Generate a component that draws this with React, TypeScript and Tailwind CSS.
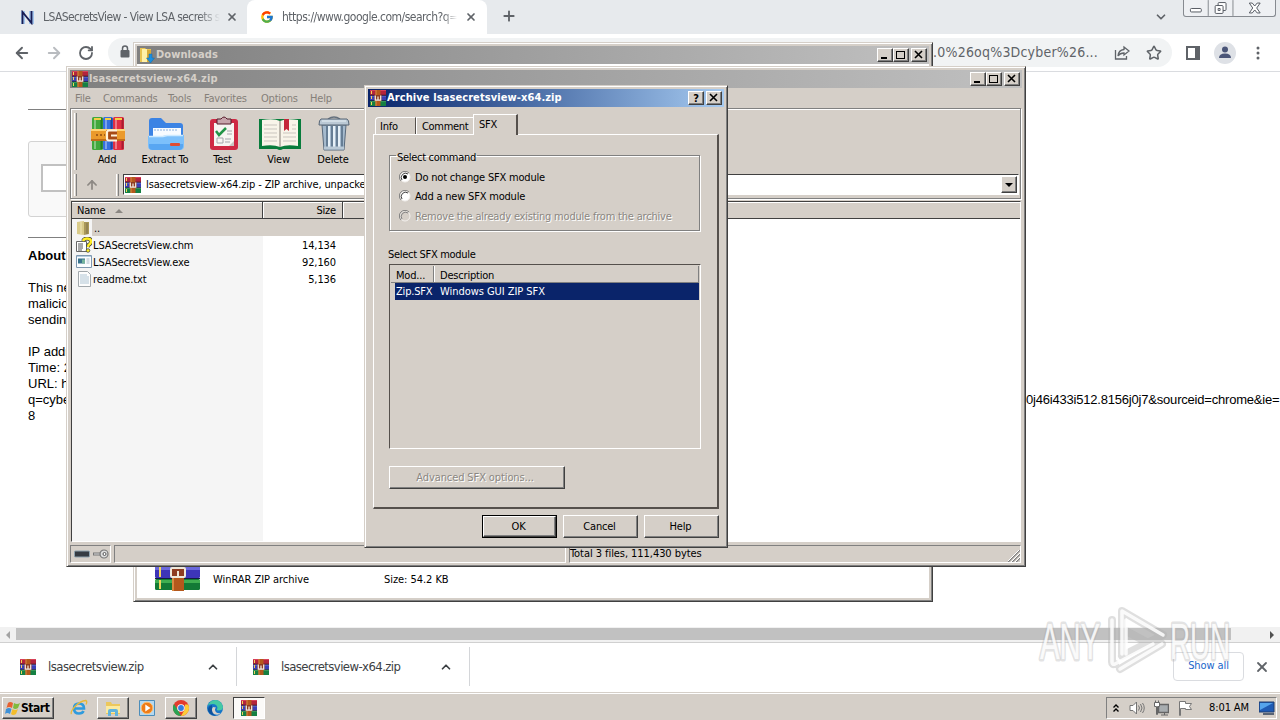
import type { ReactNode } from 'react';
import { ArrowLeft, ArrowRight, ArrowUp, ChevronDown, ChevronUp, Plus, RotateCw, Star, X } from 'lucide-react';
import { FcGoogle } from 'react-icons/fc';

const raised =
  'border border-t-white border-l-white border-r-[#404040] border-b-[#404040] shadow-[inset_-1px_-1px_0_#808080] bg-[#d5cfc8]';
const frame =
  'border border-t-[#d5cfc8] border-l-[#d5cfc8] border-r-[#404040] border-b-[#404040] shadow-[inset_1px_1px_0_#fff,inset_-1px_-1px_0_#808080] bg-[#d5cfc8]';
const etched = 'border border-t-[#808080] border-l-[#808080] border-r-white border-b-white';

function Books({ className }: { className: string }) {
  return (
    <svg viewBox="0 0 16 16" preserveAspectRatio="none" className={className}>
      <rect width="16" height="5" y="0" fill="#b3243c" />
      <rect width="16" height="1" y="0" fill="#d8405a" />
      <rect width="16" height="5" y="5.5" fill="#3b3fb4" />
      <rect width="16" height="1" y="5.5" fill="#6a78dc" />
      <rect width="16" height="5" y="11" fill="#158043" />
      <rect width="16" height="1" y="11" fill="#42b45c" />
      <rect width="16" height="1" y="4.7" fill="#381830" />
      <rect width="16" height="1" y="10.2" fill="#182848" />
      <path d="M1 1h1v3H1zM1 6h1v3H1zM1 12h1v3H1z" fill="#f2d45c" />
      <rect x="5.5" width="5" height="16" fill="#b4581c" />
      <rect x="5.5" width="1" height="16" fill="#d98840" />
      <path d="M4.500 5h7v6h-7z" fill="#8e3b20" />
      <path d="M5.300 5.500v4.700h5.400V5.500M8 6.500v3" fill="none" stroke="#f6f1e6" strokeWidth="1.200" />
    </svg>
  );
}

// Large archive icon, with the buckle drawn as a closed ring
function BooksLarge({ className }: { className: string }) {
  return (
    <svg viewBox="0 0 45 38" className={className}>
      <rect width="45" height="12" rx="1.5" fill="#b3243c" />
      <rect y="13" width="45" height="12" rx="1.5" fill="#3d35b8" />
      <rect y="14" width="45" height="3" fill="#6a68dc" />
      <rect y="26" width="45" height="11" rx="1.5" fill="#137a36" />
      <rect y="27" width="45" height="3" fill="#3fae50" />
      <path d="M0 25.500h45" stroke="#141c40" />
      <path d="M5 14v10M5 27v9" stroke="#f2d45c" strokeWidth="2" />
      <rect x="17" width="12" height="38" fill="#b4581c" />
      <path d="M18 0v38" stroke="#d98840" strokeWidth="2" />
      <rect x="16" y="15" width="14" height="9" rx="1" fill="#8e3b20" stroke="#efe8da" strokeWidth="2" />
      <path d="M23 18v5" stroke="#efe8da" strokeWidth="2" />
    </svg>
  );
}

function AddIcon() {
  return (
    <svg viewBox="0 0 36 36" className="h-9 w-9">
      <rect x="2" y="1" width="11" height="33" rx="1.5" fill="#41a83c" />
      <rect x="13" y="1" width="10" height="33" rx="1.5" fill="#3670df" />
      <rect x="23" y="1" width="11" height="33" rx="1.5" fill="#e02e42" />
      <path d="M11.500 2v31" stroke="#257a2a" strokeWidth="2" />
      <path d="M21.500 2v31" stroke="#1f479f" strokeWidth="2" />
      <path d="M32.500 2v31" stroke="#a81c30" strokeWidth="2" />
      <path d="M5 2v31M16 2v31M26 2v31" stroke="#fff" strokeOpacity=".35" strokeWidth="2" />
      <path d="M4 3h7M15 3h6M25 3h7" stroke="#f6cf45" strokeWidth="2" />
      <rect x="1" y="13" width="34" height="12" fill="#eb9a2c" />
      <path d="M1 14h34" stroke="#ffd477" strokeWidth="2" />
      <path d="M1 24h34" stroke="#b45f14" strokeWidth="1.500" />
      <path d="M6 19h9" stroke="#8f4b12" strokeWidth="1.500" strokeDasharray="2 2" />
      <path d="M16 14h11v11H16z" fill="#a84b16" />
      <path d="M27 14.500h-8q-2 0-2 2v6q0 2 2 2h8M21 19.500h6" fill="none" stroke="#fff3dd" strokeWidth="2.200" />
    </svg>
  );
}

function ExtractIcon() {
  return (
    <svg viewBox="0 0 38 36" className="h-9 w-[38px]">
      <path d="M2 5q0-3 3-3h9l5 5h14q3 0 3 3v18H2z" fill="#3b83e4" />
      <path d="M6 12h28v9H6z" fill="#f7fbff" />
      <path d="M8 13v2M11 13v2M14 13v2M17 13v2M20 13v2M23 13v2M26 13v2M29 13v2" stroke="#8ab0df" />
      <path d="M1 20h15l4-1h17v11q0 4-4 4H5q-4 0-4-4z" fill="#7cc0fb" />
      <path d="M2 20.500h14l4-1h16" stroke="#cdeaff" fill="none" strokeWidth="1.500" />
      <path d="M2 28h34v3q-1 3-4 3H6q-4 0-4-3z" fill="#58a6f2" />
      <rect x="23" y="27" width="10" height="3" rx="1" fill="#e04c34" />
    </svg>
  );
}

function TestIcon() {
  return (
    <svg viewBox="0 0 30 36" className="h-9 w-[30px]">
      <rect x="1" y="3" width="28" height="31" rx="3" fill="#cf2944" />
      <path d="M5 7h20v23H5z" fill="#f7f5f2" />
      <path d="M20 30l5-5v5z" fill="#c9c5c2" />
      <path d="M8 3h4q3-4 6 0h4v5H8z" fill="#c7a5ac" stroke="#551a2a" />
      <path d="M7 15l3 4 7-7" stroke="#239447" strokeWidth="2.500" fill="none" />
      <path d="M18 15h5M18 18h5M8 22h6v5H8zM16 23h6M16 26h5" stroke="#a5a5ab" fill="none" />
    </svg>
  );
}

function ViewIcon() {
  return (
    <svg viewBox="0 0 42 36" className="h-9 w-[42px]">
      <path d="M0 3h42v30H24q-3 2-6 0H0z" fill="#087c3c" />
      <path d="M3 4q12-2 18 1v26q-7-3-18-1zM39 4q-12-2-18 1v26q7-3 18-1z" fill="#f8f4e9" />
      <path d="M21 5v26" stroke="#a9a398" strokeWidth="1.500" />
      <path d="M5 9h13M5 13h13M5 17h13M5 21h13M5 25h13M24 17h13M24 21h13M24 25h13M33 9h4M33 13h4" stroke="#c9c5be" />
      <path d="M25 3h5v12l-2.500-2-2.500 2z" fill="#c5263a" />
    </svg>
  );
}

function TrashIcon() {
  return (
    <svg viewBox="0 0 32 36" className="h-9 w-8">
      <path d="M4 9h24l-2 25H6z" fill="#a5bacd" stroke="#596a7c" />
      <path d="M9 10v21M14 10v21M19 10v21M24 10v21" stroke="#60788f" strokeWidth="1.800" />
      <path d="M11 10v21M16 10v21M21 10v21" stroke="#e7f1f8" strokeWidth="2" />
      <path d="M10 3q6-4 12 0" fill="none" stroke="#66717e" strokeWidth="1.500" />
      <path d="M3 3h26q2 1 2 6H1q0-5 2-6z" fill="#bac8d4" stroke="#566575" />
      <path d="M4 5h24" stroke="#e9f1f6" />
      <path d="M6 32h20" stroke="#b9c9d6" strokeWidth="3" />
    </svg>
  );
}

type Glyph = 'min' | 'max' | 'close' | 'help';

function CaptionButton({ glyph }: { glyph: Glyph }) {
  return (
    <div className={`flex h-[14px] w-4 items-center justify-center ${raised}`}>
      {glyph === 'help' ? (
        <span className="text-[11px] font-bold leading-none">?</span>
      ) : (
        <svg viewBox="0 0 10 10" className="h-[10px] w-[10px]" shapeRendering="crispEdges" fill="none" stroke="#000">
          {glyph === 'min' && <path d="M1 8h6" strokeWidth="2" />}
          {glyph === 'max' && <path d="M.5 1.500h8v7h-8zM0 1h9" />}
          {glyph === 'close' && <path d="M1 1l7 7M8 1l-7 7" strokeWidth="1.600" shapeRendering="auto" />}
        </svg>
      )}
    </div>
  );
}

function Caption({ icon, title, active, buttons }: { icon: ReactNode; title: string; active?: boolean; buttons: Glyph[] }) {
  return (
    <div
      className={`flex h-[18px] shrink-0 items-center pl-0.5 pr-0.5 ${
        active ? 'bg-linear-to-r from-[#0a246a] to-[#a6caf0] text-white' : 'bg-linear-to-r from-[#808080] to-[#c0c0c0] text-[#d5cfc8]'
      }`}
    >
      {icon}
      <span className="ml-px grow pt-px text-[11px] font-bold tracking-[0.09px]">{title}</span>
      <div className="flex text-black">
        {buttons.map((b) => (
          <div key={b} className={b === 'close' ? 'ml-0.5' : ''}>
            <CaptionButton glyph={b} />
          </div>
        ))}
      </div>
    </div>
  );
}

function Radio({ label, checked, disabled }: { label: string; checked?: boolean; disabled?: boolean }) {
  return (
    <div className={`flex h-[19.500px] items-center ${disabled ? 'text-[#8b8782] [text-shadow:1px_1px_0_#fff]' : ''}`}>
      <svg viewBox="0 0 12 12" className="mr-1 h-3 w-3 -translate-y-px">
        <circle cx="6" cy="6" r="5" fill={disabled ? '#d5cfc8' : '#fff'} stroke="#f4f1ee" />
        <path d="M2 10A5.500 5.500 0 0 1 10 2" fill="none" stroke="#808080" />
        <path d="M3 9A4.300 4.300 0 0 1 9 3" fill="none" stroke={disabled ? '#808080' : '#404040'} />
        {checked && <circle cx="6" cy="6" r="2" fill="#000" />}
      </svg>
      <span>{label}</span>
    </div>
  );
}

function DownloadsWindow() {
  return (
    <div className={`absolute left-[133px] top-[42px] flex h-[560px] w-[800px] flex-col p-[3px] ${frame}`}>
      <Caption
        title="Downloads"
        buttons={['min', 'max', 'close']}
        icon={
          <svg viewBox="0 0 16 16" className="h-4 w-4">
            <path d="M1 1h5l1 1h5v13H1z" fill="#e9c452" />
            <path d="M3 2h5v13H3z" fill="#fff0a8" />
            <path d="M8 3h4v12H8z" fill="#d9ab37" />
            <path d="M10 7h3v4h2.500L11.500 16 7.500 11H10z" fill="#1b8fdf" stroke="#1768a8" strokeWidth=".5" />
          </svg>
        }
      />
      <div className="flex grow flex-col justify-end bg-white">
        <div className="flex h-[36px] items-center">
          <BooksLarge className="-mt-[17px] ml-[18px] h-[38px] w-[45px]" />
          <span className="ml-[13px] w-[171px] pt-px tracking-[-0.05px]">WinRAR ZIP archive</span>
          <span className="pt-px tracking-[-0.05px]">Size: 54.2 KB</span>
        </div>
      </div>
    </div>
  );
}

const menu = [
  { label: 'File', w: 'w-7' },
  { label: 'Commands', w: 'w-[65px]' },
  { label: 'Tools', w: 'w-9' },
  { label: 'Favorites', w: 'w-[57px]' },
  { label: 'Options', w: 'w-[49px]' },
  { label: 'Help', w: 'w-8' },
];

const tools = [
  { label: 'Add', icon: <AddIcon />, w: 'w-[58px]' },
  { label: 'Extract To', icon: <ExtractIcon />, w: 'w-[58px]' },
  { label: 'Test', icon: <TestIcon />, w: 'w-[57px]' },
  { label: 'View', icon: <ViewIcon />, w: 'w-[55px]' },
  { label: 'Delete', icon: <TrashIcon />, w: 'w-[54px]' },
];

const files = [
  {
    name: 'LSASecretsView.chm',
    size: '14,134',
    icon: (
      <svg viewBox="0 0 16 16" className="h-4 w-4">
        <path d="M.5 4.500h10v10h-10z" fill="#fff" stroke="#666" />
        <path d="M2 7h5M2 9h5M2 11h5M2 13h4" stroke="#555" />
        <path d="M7 4q1-2.500 4-2.500 4 0 4 3 0 2-2.500 3.500L12 10" fill="none" stroke="#333" strokeWidth="3.800" />
        <path d="M7 4q1-2.500 4-2.500 4 0 4 3 0 2-2.500 3.500L12 10" fill="none" stroke="#ffee25" strokeWidth="2.500" />
        <circle cx="12" cy="13.500" r="1.800" fill="#ffee25" stroke="#333" strokeWidth=".7" />
      </svg>
    ),
  },
  {
    name: 'LSASecretsView.exe',
    size: '92,160',
    icon: (
      <svg viewBox="0 0 16 16" className="h-4 w-4">
        <path d="M.5 1.500h15v12H.5z" fill="#fbfdff" stroke="#7f98b0" />
        <path d="M1 2.500h14" stroke="#b7cee2" />
        <path d="M2 4.500h7v5H2z" fill="#39738d" />
        <path d="M6 5.500h3v4H6z" fill="#75b49c" />
        <path d="M10.500 5h3M10.500 7h3M10.500 9h3" stroke="#a8bac8" />
      </svg>
    ),
  },
  {
    name: 'readme.txt',
    size: '5,136',
    icon: (
      <svg viewBox="0 0 16 16" className="h-4 w-4">
        <path d="M2.500.5h9l3 3v12h-12z" fill="#fdfdfd" stroke="#a2a8ac" />
        <path d="M4 4h7M4 6h9M4 8h9M4 10h9M4 12h9" stroke="#afc5d4" />
      </svg>
    ),
  },
];

function ArchiveWindow() {
  return (
    <div className={`absolute left-[66px] top-[66px] flex h-[501px] w-[960px] flex-col p-[3px] ${frame}`}>
      <Caption title="lsasecretsview-x64.zip" buttons={['min', 'max', 'close']} icon={<Books className="h-4 w-4" />} />
      <div className="flex h-5 shrink-0 items-center pl-[5px] pt-0.5 text-[#858079]">
        {menu.map((m) => (
          <span key={m.label} className={m.w}>
            {m.label}
          </span>
        ))}
      </div>

      {/* Toolbar and address bar */}
      <div className="h-[91px] w-[951px] shrink-0 border border-[#808080] shadow-[inset_1px_1px_0_#fff,1px_1px_0_#fff]">
        <div className="flex h-[62px] pl-[3px] pt-1">
          <div className="mr-px h-[57px] w-[3px] border-l border-r border-l-white border-r-[#808080]" />
          {tools.map((t) => (
            <div key={t.label} className={`flex flex-col items-center pt-[3px] ${t.w}`}>
              <div className="translate-x-px">{t.icon}</div>
              <span className="leading-[15px]">{t.label}</span>
            </div>
          ))}
        </div>
        <div className="flex h-[27px] items-center pl-[3px] pr-px">
          <div className="h-[22px] w-[3px] border-l border-r border-l-white border-r-[#808080]" />
          <ArrowUp className="ml-2 mr-[17px] h-[14px] w-[14px] text-[#8d8984]" strokeWidth={3} />
          <div className="mr-1 h-[22px] w-[3px] border-l border-r border-l-white border-r-[#808080]" />
          <div className="flex h-[21px] grow items-center border border-b-white border-l-[#404040] border-r-white border-t-[#404040] bg-white p-px">
            <Books className="h-4 w-4" />
            <span className="ml-[5px] grow pt-px tracking-[-0.12px]">lsasecretsview-x64.zip - ZIP archive, unpacked size 111,430 bytes</span>
            <div className={`flex h-[17px] w-4 items-center justify-center ${raised}`}>
              <svg viewBox="0 0 8 4" className="h-1 w-2">
                <path d="M0 0h8L4 4z" />
              </svg>
            </div>
          </div>
        </div>
      </div>

      {/* File list */}
      <div className="ml-px mr-px mt-0.5 flex h-[342px] flex-col border border-b-white border-l-[#404040] border-r-white border-t-[#404040] bg-white">
        <div className="flex h-[17px] shrink-0 border-b border-[#404040] bg-[#d5cfc8] leading-[18px] shadow-[inset_0_1px_0_#fff]">
          <div className="flex w-[191px] items-center border-r border-[#404040] pl-[5px] pt-px">
            Name
            <svg viewBox="0 0 8 4" className="ml-2.5 h-1 w-2">
              <path d="M0 4h8L4 0z" fill="#8b8782" />
            </svg>
          </div>
          <div className="w-[80px] border-l border-r border-l-white border-r-[#404040] pr-1.5 text-right">Size</div>
          <div className="grow border-l border-white" />
        </div>
        <div className="flex grow bg-white">
          <div className="w-[191px] bg-[#f5f5f5]">
            <div className="flex h-[17px] items-center pl-1">
              <svg viewBox="0 0 16 16" className="h-4 w-4">
                <path d="M1 2l7-1v14l-7-1z" fill="#d9cb8a" />
                <path d="M8 2h5v12l-5 1z" fill="#a9985a" />
                <path d="M5 2v12" stroke="#efe6b8" />
                <path d="M11 3v11" stroke="#7e7350" />
              </svg>
              <span className="h-[17px] grow bg-[#d5cfc8] pl-0.5 leading-[19px]">..</span>
            </div>
            {files.map((f) => (
              <div key={f.name} className="flex h-[17px] items-center pl-1">
                {f.icon}
                <span className="ml-px pt-[3px] tracking-[-0.12px]">{f.name}</span>
              </div>
            ))}
          </div>
          <div className="w-[400px]">
            <div className="h-[17px] bg-[#d5cfc8]" />
            {files.map((f) => (
              <div key={f.name} className="h-[17px] w-[73px] text-right leading-[19px] tracking-[-0.1px]">
                {f.size}
              </div>
            ))}
          </div>
        </div>
      </div>

      {/* Status bar */}
      <div className="mr-px mt-[3px] flex h-[18px] gap-[3px]">
        <div className={`flex w-[41px] items-center pl-[3px] ${etched}`}>
          <svg viewBox="0 0 36 10" className="h-[10px] w-9">
            <rect x=".5" y="2" width="15" height="6" rx="1" fill="#353b42" stroke="#8ea2ae" />
            <path d="M19 5h9" stroke="#777" strokeWidth="3" />
            <path d="M20 5h8" stroke="#ddd" />
            <circle cx="30" cy="5" r="4" fill="#ddd" stroke="#777" strokeWidth="1.200" />
            <circle cx="30.500" cy="5" r="1.500" fill="#fff" stroke="#555" />
          </svg>
        </div>
        <div className={`w-[452px] ${etched}`} />
        <div className={`flex grow items-center justify-between ${etched}`}>
          <span className="pt-px tracking-[-0.06px]">Total 3 files, 111,430 bytes</span>
          <svg viewBox="0 0 12 12" className="h-3 w-3 self-end" fill="none">
            <path d="M0 12L12 0M4 12l8-8M8 12l4-4" stroke="#808080" strokeWidth="1.500" />
            <path d="M-1 12L12-1M3 12l9-9M7 12l5-5" stroke="#fff" />
          </svg>
        </div>
      </div>
    </div>
  );
}

function ArchiveDialog() {
  return (
    <div className={`absolute left-[364px] top-[85px] h-[463px] w-[364px] p-[3px] ${frame}`}>
      <Caption active title="Archive lsasecretsview-x64.zip" buttons={['help', 'close']} icon={<Books className="h-4 w-4" />} />

      <div className="flex h-[27px] items-end pl-[7px]">
        <div className="h-[17px] w-[41px] rounded-tl-sm border-l border-r border-t border-l-white border-r-[#55504c] border-t-white pl-1 leading-[18px]">
          Info
        </div>
        <div className="h-[17px] w-[57px] border-l border-t border-white pl-[5px] leading-[18px] tracking-[-0.3px]">Comment</div>
        <div className="z-10 -mb-px h-[21px] w-[45px] border-l border-r-2 border-t border-l-white border-r-[#55504c] border-t-white bg-[#d5cfc8] pl-[5px] leading-[20px]">
          SFX
        </div>
      </div>

      <div className="ml-[5px] h-[375px] w-[346px] border-b-2 border-l border-r-2 border-t border-b-[#55504c] border-l-white border-r-[#55504c] border-t-white px-[15px] pt-3">
        <fieldset className="h-[84px] w-[311px] border border-[#808080] px-[7px] shadow-[inset_1px_1px_0_#fff,1px_1px_0_#fff]">
          <legend className="-ml-px px-px pt-1 leading-3 tracking-[-0.3px]">
            <span className="relative top-px">Select command</span>
          </legend>
          <div className="pl-0.5 pt-[5px]">
            <Radio checked label="Do not change SFX module" />
            <Radio label="Add a new SFX module" />
            <Radio disabled label="Remove the already existing module from the archive" />
          </div>
        </fieldset>
        <div className="-ml-px mt-[17px] h-4 leading-[14px] tracking-[-0.3px]">Select SFX module</div>

        <div className="h-[185px] w-[312px] border border-b-white border-l-[#55504c] border-r-white border-t-[#55504c] p-px">
          <div className="flex h-[17px] border-b border-r border-[#808080] leading-[19px]">
            <div className="w-[43px] border-r border-[#808080] pl-[5px]">Mod...</div>
            <div className="border-l border-white pl-[5px]">Description</div>
          </div>
          <div className="ml-1 flex h-[17px] bg-[#0a246a] pl-px leading-[18px] text-white">
            <span className="w-[44px]">Zip.SFX</span>
            <span className="tracking-[-0.05px]">Windows GUI ZIP SFX</span>
          </div>
        </div>

        <div className={`mt-[17px] flex h-[23px] w-44 items-center justify-center pr-1 pt-px tracking-[-0.1px] text-[#8b8782] [text-shadow:1px_1px_0_#fff] ${raised}`}>
          Advanced SFX options...
        </div>
      </div>

      <div className="mr-[5px] mt-1.5 flex justify-end gap-1.5">
        <div className="border border-black">
          <div className={`flex h-[21px] w-[73px] items-center justify-center pr-0.5 pt-px ${raised}`}>OK</div>
        </div>
        <div className={`flex h-[23px] w-[75px] items-center justify-center pr-0.5 pt-px ${raised}`}>Cancel</div>
        <div className={`flex h-[23px] w-[75px] items-center justify-center pr-0.5 pt-px ${raised}`}>Help</div>
      </div>
    </div>
  );
}

function BrowserTop() {
  return (
    <>
      <div className="flex h-[34px] shrink-0 bg-[#e7eaed] text-[12px] text-[#5f6368]">
        <div className="flex w-[247px] items-center pl-[21px]">
          <svg viewBox="0 0 13 15" className="h-[15px] w-[13px]">
            <path d="M0 1h4v13H0zM8 1h5v13H8z" fill="#a4c6ed" />
            <path d="M1.500 14V2l9 11V1" fill="none" stroke="#191c53" strokeWidth="1.800" />
          </svg>
          <span className="ml-[9px] w-[177px] whitespace-nowrap mask-r-from-88% tracking-[-0.6px]">
            LSASecretsView - View LSA secrets s
          </span>
          <X className="ml-1.5 h-3 w-3" strokeWidth={3.4} />
        </div>
        <div className="flex w-[240px] items-center rounded-t-lg bg-white pl-[13px]">
          <FcGoogle className="h-[14px] w-[14px]" />
          <span className="ml-2 w-[175px] whitespace-nowrap mask-r-from-92% tracking-[-0.5px]">
            https://www.google.com/search?q=
          </span>
          <X className="ml-2 h-3 w-3" strokeWidth={3.4} />
        </div>
        <Plus className="ml-[14px] mt-2 h-4 w-4" strokeWidth={2.8} />
        <ChevronDown className="ml-[637px] mt-[10px] h-[14px] w-[14px]" strokeWidth={3} />
        <div className="ml-[15px] flex h-[17px] w-[93px] rounded-b-[3px] border border-t-0 border-[#868a90] bg-[#eef0f3]">
          <svg viewBox="0 0 92 16" className="h-4 w-[92px]" fill="none" stroke="#565b63">
            <path d="M24.500 0v16M49.500 0v16" stroke="#868a90" />
            <rect x="6.500" y="8.500" width="11" height="3.500" rx="1" fill="#fff" />
            <rect x="34.500" y="2.500" width="8" height="8" rx="1" fill="#fff" />
            <rect x="31.500" y="5.500" width="8" height="8" rx="1" fill="#fff" />
            <path d="M34.500 8.500h2v2h-2z" />
            <path d="M66 3h3l2.500 3L74 3h3l-3.500 5 3.500 5h-3l-2.500-3-2.500 3h-3l3.500-5z" fill="#fff" />
          </svg>
        </div>
      </div>
      <div className="flex h-[38px] shrink-0 items-center border-b border-[#dadce0] bg-white text-[#5f6368]">
        <ArrowLeft className="ml-[13px] h-[18px] w-[18px]" strokeWidth={2.5} />
        <ArrowRight className="ml-[14px] h-[18px] w-[18px] text-[#b9bcc0]" strokeWidth={2.5} />
        <RotateCw className="ml-[15px] h-4 w-4" strokeWidth={2.7} />
        <div className="ml-[14px] flex h-[29px] w-[1064px] items-center rounded-full bg-[#f1f3f4]">
          <svg viewBox="0 0 10 13" className="ml-3 h-[13px] w-[10px] -translate-y-px">
            <path d="M2.500 6V3.500q0-2.500 2.500-2.500t2.500 2.500V6" fill="none" stroke="currentColor" strokeWidth="1.500" />
            <rect x=".5" y="5" width="9" height="7.500" rx="1" fill="currentColor" />
          </svg>
          <span className="ml-auto mr-4 text-[14px] tracking-[0.2px]">.0%26oq%3Dcyber%26...</span>
          <svg viewBox="0 0 16 16" className="h-4 w-4" fill="none" stroke="currentColor" strokeWidth="1.300">
            <path d="M1.500 5v9h11v-3" />
            <path d="M10 2l5 4-5 4V8Q6 8 4 11q.5-6 6-6.500z" />
          </svg>
          <Star className="ml-4 mr-2.5 h-4 w-4" strokeWidth={2.3} />
        </div>
        <svg viewBox="0 0 14 14" className="ml-[14px] h-[14px] w-[14px]">
          <path d="M1 1h12v12H1z" fill="none" stroke="currentColor" strokeWidth="2" />
          <path d="M9 0h5v14H9z" fill="currentColor" />
        </svg>
        <svg viewBox="0 0 22 22" className="ml-[14px] h-[22px] w-[22px]">
          <circle cx="11" cy="11" r="11" fill="#dee1e6" />
          <circle cx="11" cy="7.500" r="3" fill="#4a5578" />
          <path d="M5 16q0-4.500 6-4.500t6 4.500z" fill="#4a5578" />
        </svg>
        <svg viewBox="0 0 4 14" className="ml-5 h-[14px] w-1" fill="currentColor">
          <circle cx="2" cy="2" r="1.500" />
          <circle cx="2" cy="7" r="1.500" />
          <circle cx="2" cy="12" r="1.500" />
        </svg>
      </div>
    </>
  );
}

function PageBody() {
  return (
    <div className="flex h-[555px] shrink-0 flex-col overflow-hidden bg-white pl-7 pt-[37px] [font-family:'Liberation_Sans',Arial,sans-serif] text-[13px] leading-4 tracking-normal">
      <div className="w-[600px] border-t border-[#808080]" />
      <div className="mt-[31px] h-[76px] w-[304px] rounded-[3px] border border-[#d3d3d3] bg-[#f9f9f9] pl-3 pt-[22px]">
        <div className="h-[28px] w-7 border-2 border-[#c1c1c1] bg-white" />
      </div>
      <div className="mt-5 w-[600px] border-t border-[#808080]" />
      <div className="mt-2.5 font-bold">About</div>
      <div className="mt-4 h-12 w-[400px] whitespace-pre">{'This net\nmalicio\nsendin'}</div>
      <div className="mt-4 flex whitespace-pre">
        <div className="w-[998px] shrink-0">{'IP addr\nTime: 2\nURL: h\nq=cybe\n8'}</div>
        <div className="shrink-0 pt-12 tracking-[-0.2px]">0j46i433i512.8156j0j7&amp;sourceid=chrome&amp;ie=</div>
      </div>
    </div>
  );
}

function Shelf() {
  return (
    <>
      <div className="flex h-4 shrink-0 items-center border-b border-[#d0d0d0] bg-[#f1f1f1]">
        <svg viewBox="0 0 4 8" className="ml-1.5 h-2 w-1">
          <path d="M4 0v8L0 4z" fill="#a3a3a3" />
        </svg>
        <div className="-mt-px ml-1.5 h-3 w-[1215px] bg-[#c1c1c1]" />
        <svg viewBox="0 0 4 8" className="ml-[39px] h-2 w-1">
          <path d="M0 0v8l4-4z" fill="#505050" />
        </svg>
      </div>
      <div className="flex h-[49px] shrink-0 items-center bg-white pb-0.5 text-[13px] text-[#3c4043]">
        <div className="flex h-[39px] w-[237px] items-center border-r border-[#d4d6d9] pl-5">
          <Books className="h-4 w-4" />
          <span className="ml-3 grow tracking-[-0.52px]">lsasecretsview.zip</span>
          <ChevronUp className="mr-4 h-[14px] w-[14px]" strokeWidth={3} />
        </div>
        <div className="flex h-[39px] w-[233px] items-center border-r border-[#d4d6d9] pl-4">
          <Books className="h-4 w-4" />
          <span className="ml-3 grow tracking-[-0.58px]">lsasecretsview-x64.zip</span>
          <ChevronUp className="mr-4 h-[14px] w-[14px]" strokeWidth={3} />
        </div>
        <div className="ml-auto flex h-[29px] w-[71px] items-center justify-center rounded border border-[#dadce0] text-[11px] tracking-[-0.1px] text-[#1a66ca]">
          Show all
        </div>
        <X className="ml-2.5 mr-[10px] h-4 w-4 text-[#5f6368]" strokeWidth={2.7} />
      </div>
    </>
  );
}

function Taskbar() {
  return (
    <div className="flex h-[28px] shrink-0 items-center border-t border-[#d5cfc8] bg-[#d5cfc8] pt-0.5 shadow-[inset_0_1px_0_#fff]">
      <div className={`ml-0.5 flex h-[22px] w-[52px] items-center pl-0.5 ${raised}`}>
        <svg viewBox="0 0 16 16" className="h-4 w-4">
          <path d="M3 3q2-2 5 0L7 8Q4 6 1.500 8z" fill="#e76130" />
          <path d="M9 3q3 2 6 0l-2 5q-3 2-5 0z" fill="#80ba3b" />
          <path d="M1 9q3-2 5.500 0L5 14q-3-2-5 0z" fill="#3f91d7" />
          <path d="M7.500 9q3 2 5.500 0l-2 5q-3 2-5 0z" fill="#f3bd2c" />
        </svg>
        <span className="text-[12px] font-bold tracking-[-0.45px]">Start</span>
      </div>
      <svg viewBox="0 0 18 18" className="ml-4 h-[18px] w-[18px]" fill="none">
        <path d="M4 9.500h10Q14 4.500 9 4.500T4 9.500q0 5 5 5 3.500 0 4.500-2.500" stroke="#2f9bdd" strokeWidth="2.600" />
        <path d="M1.500 15Q0 13 5 7.500T16 1.500q1.500 1 0 4" stroke="#e7b93a" strokeWidth="1.300" />
      </svg>
      <div className={`ml-[9px] flex h-[22px] w-8 items-center justify-center ${raised}`}>
        <svg viewBox="0 0 16 16" className="h-4 w-4">
          <path d="M1 2h5l1 2h8v10H1z" fill="#ecc75b" />
          <path d="M1 6h14v7H1z" fill="#fbeaa0" />
          <path d="M3 16v-5q0-2 2-2h6q2 0 2 2v5h-3v-4H6v4z" fill="#62b4dc" />
        </svg>
      </div>
      <svg viewBox="0 0 16 16" className="ml-2.5 h-4 w-4">
        <path d="M.5.5h15v15H.5z" fill="#b5d8ef" stroke="#4c8dba" />
        <circle cx="8" cy="8" r="5.800" fill="#ee7c18" stroke="#ffbc6b" />
        <path d="M6.300 4.500v7L11.500 8z" fill="#fff" />
      </svg>
      <div className={`ml-2.5 flex h-[22px] w-8 items-center justify-center ${raised}`}>
        <svg viewBox="0 0 16 16" className="h-4 w-4">
          <circle cx="8" cy="8" r="8" fill="#e33b2e" />
          <path d="M1 4l4.500 7L8 16A8 8 0 0 1 1 4z" fill="#29a353" />
          <path d="M8 16l4-7V4.500h3.200A8 8 0 0 1 8 16z" fill="#fccd37" />
          <circle cx="8" cy="8" r="3.800" fill="#fff" />
          <circle cx="8" cy="8" r="2.900" fill="#337de1" />
        </svg>
      </div>
      <svg viewBox="0 0 16 16" className="ml-2.5 h-4 w-4">
        <circle cx="8" cy="8" r="8" fill="#1676c9" />
        <path d="M.5 6Q3 0 8.500 0T16 7q0 3.500-5 3.500-2-.5-.5-2.500-.5-4-5-4-3 0-5 2z" fill="#44c9a4" />
        <path d="M6 7q-3 4 1 7 4 2 7-1-5 1-6-3-.5-1 1-2.500z" fill="#d5cfc8" />
        <path d="M5 8q-1 5 4 8Q2 15 1 10q0-4 4-5z" fill="#0e529d" />
      </svg>
      <div className="ml-2.5 flex h-[22px] w-8 items-center justify-center border border-b-white border-l-[#404040] border-r-white border-t-[#404040] bg-[#fbfaf8]">
        <Books className="h-4 w-4" />
      </div>

      <div className={`ml-auto mr-[3px] flex h-[22px] w-[171px] items-center pl-1.5 ${etched}`}>
        <svg viewBox="0 0 6 8" className="h-2 w-1.5" fill="none" stroke="#000" strokeWidth="1.400">
          <path d="M.5 3.500L3 1l2.500 2.500M.5 7.500L3 5l2.500 2.500" />
        </svg>
        <svg viewBox="0 0 16 16" className="ml-2.5 h-4 w-4" fill="#fff" stroke="#747474">
          <path d="M1 5.500h3L7.500 2v12L4 10.500H1z" />
          <path d="M9.500 5.500q2 2.500 0 5M11.500 4q3 4 0 8M13.500 3q3.500 5 0 10" fill="none" />
        </svg>
        <svg viewBox="0 0 16 16" className="ml-2 h-4 w-4" fill="#fff" stroke="#666">
          <path d="M5.500 4.500h10v8h-10z" fill="#a8adb0" strokeWidth="1.500" />
          <path d="M8 15h7M11.500 13v2" />
          <path d="M1.500 2.500h5v4h-2v8h-1v-8h-2zM2.500.5v2M5.500.5v2" />
        </svg>
        <svg viewBox="0 0 16 16" className="ml-2 h-4 w-4" fill="#fff" stroke="#777">
          <path d="M2.500 1.500h6v2h6l-2 3 2 3h-6v-1h-5v7h-1z" />
        </svg>
        <span className="ml-4 whitespace-nowrap pt-0.5 tracking-[-0.1px]">8:01 AM</span>
        <svg viewBox="0 0 16 14" className="ml-auto mr-px h-[14px] w-4">
          <path d="M0 1h15v10H0z" fill="#1f5bb4" stroke="#1e3f70" />
          <path d="M1 2h13L1 9z" fill="#55a4ec" />
          <path d="M4 13h11" stroke="#586475" strokeWidth="2" />
        </svg>
      </div>
    </div>
  );
}

function Watermark() {
  return (
    <svg viewBox="0 0 200 72" className="absolute left-[1036px] top-[604px] h-[72px] w-[200px]">
      <g fontFamily="Liberation Sans Narrow, Liberation Sans, sans-serif" fontSize="50" strokeLinejoin="round">
        <g fill="#fff" fillOpacity=".85" stroke="#a8a8a8" strokeOpacity=".32" strokeWidth="5" paintOrder="stroke">
          <text x="4" y="55" textLength="60" lengthAdjust="spacingAndGlyphs">ANY</text>
          <text x="134" y="55" textLength="60" lengthAdjust="spacingAndGlyphs">RUN</text>
        </g>
      </g>
      <g fill="none" strokeLinejoin="round" strokeLinecap="round">
        <path
          d="M86 50V7l41 24-41 21M76 16v42q0 3 3 2M84 65l42-25M90 27l28 15"
          stroke="#b0b0b0"
          strokeOpacity=".4"
          strokeWidth="8"
        />
        <path d="M86 50V7l41 24M76 16v42q0 3 3 2l38-20M84 65l42-25M90 16v34" stroke="#fff" strokeOpacity=".85" strokeWidth="3.500" />
      </g>
    </svg>
  );
}

export default function App() {
  return (
    <div className="relative flex h-[720px] w-[1280px] flex-col overflow-hidden bg-white text-[11px] tracking-[-0.2px] text-black [font-family:'DejaVu_Sans_Condensed','DejaVu_Sans',sans-serif]">
      <BrowserTop />
      <PageBody />
      <Shelf />
      <Taskbar />
      <DownloadsWindow />
      <ArchiveWindow />
      <ArchiveDialog />
      <Watermark />
    </div>
  );
}
